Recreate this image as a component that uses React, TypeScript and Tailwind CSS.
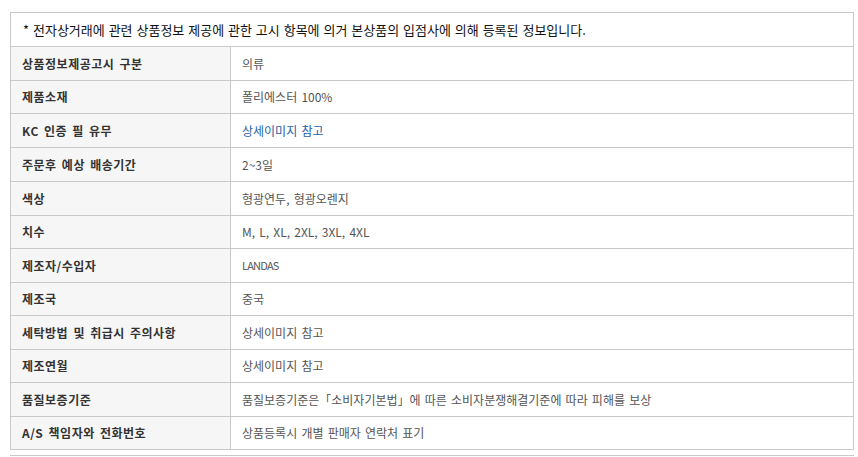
import React from "react";

const rows: { label: string; value: string; link?: boolean; latin?: boolean; h: string }[] = [
  { label: "상품정보제공고시 구분", value: "의류", h: "h-[34px]" },
  { label: "제품소재", value: "폴리에스터 100%", h: "h-[33px]" },
  { label: "KC 인증 필 유무", value: "상세이미지 참고", link: true, h: "h-[34px]" },
  { label: "주문후 예상 배송기간", value: "2~3일", h: "h-[34px]" },
  { label: "색상", value: "형광연두, 형광오렌지", h: "h-[34px]" },
  { label: "치수", value: "M, L, XL, 2XL, 3XL, 4XL", h: "h-[33px]" },
  { label: "제조자/수입자", value: "LANDAS", latin: true, h: "h-[34px]" },
  { label: "제조국", value: "중국", h: "h-[33px]" },
  { label: "세탁방법 및 취급시 주의사항", value: "상세이미지 참고", h: "h-[34px]" },
  { label: "제조연월", value: "상세이미지 참고", h: "h-[33px]" },
  { label: "품질보증기준", value: "품질보증기준은「소비자기본법」에 따른 소비자분쟁해결기준에 따라 피해를 보상", h: "h-[34px]" },
  { label: "A/S 책임자와 전화번호", value: "상품등록시 개별 판매자 연락처 표기", h: "h-[33px]" },
];

export default function App() {
  return (
    <div
      className="w-[858px] h-[457px] bg-white overflow-hidden text-[12px] leading-none"
      style={{ fontFamily: '"Noto Sans CJK KR", "Noto Sans", sans-serif' }}
    >
      <div className="pt-3 pl-[10px] w-[854px]">
        <div className="border border-[#c9c9c9] border-b-0">
          <div className="h-[34px] flex items-center pl-[12px] text-[13px] text-[#111] [word-spacing:1px] border-b border-[#c9c9c9]">
            * 전자상거래에 관련 상품정보 제공에 관한 고시 항목에 의거 본상품의 입점사에 의해 등록된 정보입니다.
          </div>
          {rows.map((r, i) => (
            <div key={i} className={`flex ${r.h} border-b border-[#c9c9c9]`}>
              <div className="w-[220px] shrink-0 bg-[#f6f6f6] border-r border-[#c9c9c9] flex items-center pl-[11px] font-bold text-[#333] tracking-[0.5px] [word-spacing:2px]">
                {r.label}
              </div>
              <div
                className={`flex items-center pl-[11px] [word-spacing:1.5px] ${
                  r.link ? "text-[#1f5fa5]" : "text-[#555]"
                } ${r.latin ? "text-[11px] tracking-[-0.8px]" : ""}`}
              >
                {r.value}
              </div>
            </div>
          ))}
        </div>
        <div className="mt-[5px] border-t border-[#c9c9c9]" />
      </div>
    </div>
  );
}
